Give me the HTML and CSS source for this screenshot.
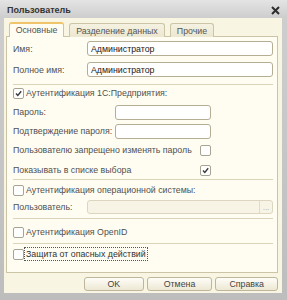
FILE: index.html
```html
<!DOCTYPE html>
<html lang="ru">
<head>
<meta charset="utf-8">
<title>Пользователь</title>
<link rel="stylesheet" href="styles.css">
</head>
<body>
<div class="window">
  <div class="titlebar">
    <span class="title">Пользователь</span>
    <svg class="close" width="9" height="9" viewBox="0 0 9 9"><path d="M1 1 L8 8 M8 1 L1 8" stroke="#2e2e2e" stroke-width="2"/></svg>
  </div>
  <div class="body">
    <div class="tabs">
      <div class="tab active">Основные</div>
      <div class="tab w2">Разделение данных</div>
      <div class="tab w3">Прочие</div>
    </div>
    <div class="panel">
      <div class="row r-name"><span class="label">Имя:</span><div class="input wide">Администратор</div></div>
      <div class="row r-full"><span class="label">Полное имя:</span><div class="input wide">Администратор</div></div>
      <div class="sep s1"></div>
      <div class="crow c1"><span class="cb"><svg width="9" height="9" viewBox="0 0 9 9"><path d="M2 4.6 L3.8 6.5 L7.2 2.2" fill="none" stroke="#3a3a3a" stroke-width="1.4"/></svg></span><span>Аутентификация 1С:Предприятия:</span></div>
      <div class="row r-pass"><span class="label">Пароль:</span><div class="input pw"></div></div>
      <div class="row r-conf"><span class="label">Подтверждение пароля:</span><div class="input pw"></div></div>
      <div class="row r-forbid"><span class="label lw">Пользователю запрещено изменять пароль</span><span class="cb"></span></div>
      <div class="row r-show"><span class="label lw">Показывать в списке выбора</span><span class="cb"><svg width="9" height="9" viewBox="0 0 9 9"><path d="M2 4.6 L3.8 6.5 L7.2 2.2" fill="none" stroke="#3a3a3a" stroke-width="1.4"/></svg></span></div>
      <div class="sep s2"></div>
      <div class="crow c2"><span class="cb"></span><span>Аутентификация операционной системы:</span></div>
      <div class="row r-user"><span class="label">Пользователь:</span><div class="input wide disabled"><span class="fill"></span><span class="dots">...</span></div></div>
      <div class="sep s3"></div>
      <div class="crow c3"><span class="cb"></span><span>Аутентификация OpenID</span></div>
      <div class="sep s4"></div>
      <div class="crow c4"><span class="cb"></span><span class="focus">Защита от опасных действий</span></div>
    </div>
    <div class="buttons">
      <div class="btn b-ok">OK</div>
      <div class="btn b-cancel">Отмена</div>
      <div class="btn b-help">Справка</div>
    </div>
  </div>
</div>
</body>
</html>
```
FILE: styles.css
```css
html, body {
  margin: 0;
  padding: 0;
}
body {
  width: 287px;
  height: 300px;
  background: #c4c4c4;
  font-family: "Liberation Sans", Arial, sans-serif;
  font-size: 8.8px;
  color: #505050;
  overflow: hidden;
}
.window {
  width: 287px;
  height: 300px;
  display: flex;
  flex-direction: column;
  background: linear-gradient(#cfcfcf, #bdbdbd);
}
.titlebar {
  height: 18px;
  flex: none;
  display: flex;
  align-items: center;
  justify-content: space-between;
  padding: 0 7px 0 7px;
  background: linear-gradient(#e4e4e4, #cdcdcd);
}
.title {
  font-weight: bold;
  font-size: 9px;
  color: #333;
  margin-top: 2px;
}
.close {
  margin-top: 3px;
}
.body {
  margin: 0 5px 0 4px;
  height: 275px;
  background: #f8f5e3;
  display: flex;
  flex-direction: column;
  padding: 4px 4px 0 2px;
  box-sizing: border-box;
}
.tabs {
  display: flex;
  gap: 5px;
  margin-left: 3px;
  height: 15px;
  position: relative;
  z-index: 1;
  margin-bottom: -1px;
}
.tab {
  height: 14px;
  box-sizing: border-box;
  border: 1px solid #cbc4a6;
  border-bottom: none;
  border-radius: 3px 3px 0 0;
  background: linear-gradient(#f5f2e2, #ece7d0);
  display: flex;
  align-items: center;
  justify-content: center;
  margin-top: 1px;
  color: #555;
  white-space: nowrap;
}
.tab.active {
  width: 55px;
  height: 15px;
  margin-top: 0;
  background: #fffdf2;
  border-top: 2px solid #efc46a;
  padding-bottom: 1px;
}
.tab.w2 { width: 96px; }
.tab.w3 { width: 44px; }
.panel {
  height: 237px;
  box-sizing: border-box;
  border: 1px solid #cbc4a6;
  background: #fffdf2;
  display: flex;
  flex-direction: column;
  padding: 0 4px 0 6px;
}
.row {
  display: flex;
  align-items: center;
}
.label {
  width: 74px;
  flex: none;
  white-space: nowrap;
}
.lw { width: 187px; }
.r-name { margin-top: 3px; height: 17px; }
.r-full { margin-top: 4px; height: 17px; }
.r-pass { margin-top: 5px; height: 16px; }
.r-conf { margin-top: 3px; height: 16px; }
.r-forbid { margin-top: 4px; height: 14px; }
.r-show { margin-top: 6px; height: 14px; }
.r-user { margin-top: 3px; height: 15px; }
.r-pass .label, .r-conf .label { width: 102px; }
.input {
  height: 15px;
  box-sizing: border-box;
  border: 1px solid #b5ae95;
  border-radius: 3px;
  background: #fff;
  padding-left: 3px;
  color: #222;
  display: flex;
  align-items: center;
}
.input.wide { width: 186px; }
.input.pw { width: 96px; }
.input.disabled {
  height: 14px;
  background: #f7f4e5;
  border-color: #dcd6c0;
  padding: 0;
}
.fill { flex: 1; }
.dots {
  width: 12px;
  height: 100%;
  border-left: 1px solid #e2dcc6;
  color: #aaa;
  font-size: 8px;
  display: flex;
  align-items: flex-end;
  justify-content: center;
  line-height: 10px;
}
.sep {
  height: 1px;
  background: #dbd4bb;
  flex: none;
}
.s1 { margin-top: 6px; }
.s2 { margin-top: 2px; }
.s3 { margin-top: 4px; }
.s4 { margin-top: 5px; }
.crow {
  display: flex;
  align-items: center;
  gap: 2px;
  height: 12px;
}
.c1 { margin-top: 2px; }
.c2 { margin-top: 4px; }
.c3 { margin-top: 7px; }
.c4 { margin-top: 3px; height: 14px; }
.cb {
  width: 11px;
  height: 11px;
  box-sizing: border-box;
  border: 1px solid #a8a494;
  border-radius: 2px;
  background: #fff;
  display: flex;
  align-items: center;
  justify-content: center;
  flex: none;
}
.focus {
  outline: 1px dotted #555;
  outline-offset: 1px;
  color: #333;
}
.buttons {
  display: flex;
  gap: 3px;
  margin-top: 4px;
  margin-left: 78px;
}
.btn {
  height: 14px;
  box-sizing: border-box;
  border: 1px solid #bdb69c;
  border-radius: 3px;
  background: linear-gradient(#fefdf8, #ede8d3);
  display: flex;
  align-items: center;
  justify-content: center;
  color: #444;
}
.b-ok { width: 60px; }
.b-cancel { width: 66px; }
.b-help { width: 63px; }
```
